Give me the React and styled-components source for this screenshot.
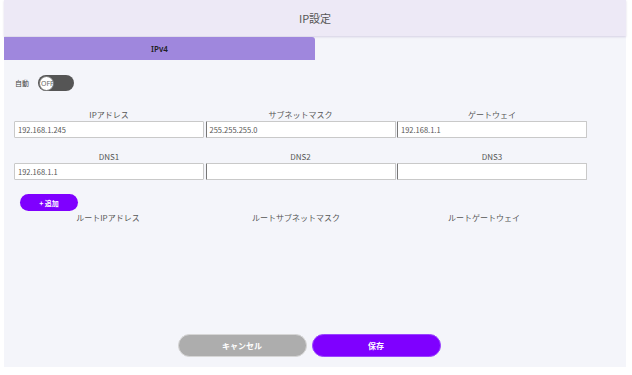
import styled, {createGlobalStyle} from 'styled-components'

const GlobalStyle = createGlobalStyle`
    html, body {
        margin: 0;
        padding: 0;
        background: #ffffff;
    }
    body {
        font-family: "Noto Sans CJK JP", "Noto Sans", sans-serif;
        color: #555;
    }
`

const fields = [
    [
        {label: 'IPアドレス', value: '192.168.1.245'},
        {label: 'サブネットマスク', value: '255.255.255.0', mark: true},
        {label: 'ゲートウェイ', value: '192.168.1.1', mark: true},
    ],
    [
        {label: 'DNS1', value: '192.168.1.1'},
        {label: 'DNS2', value: '', mark: true},
        {label: 'DNS3', value: '', mark: true},
    ],
]

const routeColumns = ['ルートIPアドレス', 'ルートサブネットマスク', 'ルートゲートウェイ']

const App = () => {
    return (
        <>
            <GlobalStyle/>
            <Panel>
                <Header>IP設定</Header>
                <TabBar>
                    <Tab>IPv4</Tab>
                </TabBar>
                <Body>
                    <ToggleRow>
                        <SmallLabel>自動</SmallLabel>
                        <Toggle>
                            <Knob>OFF</Knob>
                        </Toggle>
                    </ToggleRow>
                    {fields.map((row, i) => (
                        <FieldGrid key={i}>
                            {row.map(f => (
                                <Field key={f.label}>
                                    <FieldLabel>{f.label}</FieldLabel>
                                    <Input $mark={f.mark}>{f.value}</Input>
                                </Field>
                            ))}
                        </FieldGrid>
                    ))}
                    <AddButton>+ 追加</AddButton>
                    <RouteGrid>
                        {routeColumns.map(c => <FieldLabel key={c}>{c}</FieldLabel>)}
                    </RouteGrid>
                </Body>
                <Footer>
                    <PillButton $variant="cancel">キャンセル</PillButton>
                    <PillButton>保存</PillButton>
                </Footer>
            </Panel>
        </>
    )
}

export default App

const Panel = styled.div`
    margin: 0 6px 0 4px;
    height: 367px;
    background: #f4f5fa;
    display: flex;
    flex-direction: column;
`

const Header = styled.div`
    height: 36px;
    flex-shrink: 0;
    display: flex;
    align-items: center;
    justify-content: center;
    background: #ede9f6;
    box-shadow: 0 1px 2px rgba(120, 100, 160, 0.25);
    font-size: 11px;
    color: #555;
`

const TabBar = styled.div`
    margin-top: 1px;
    display: flex;
`

const Tab = styled.div`
    width: 311px;
    height: 23px;
    display: flex;
    align-items: center;
    justify-content: center;
    background: #9f87dd;
    border-top-right-radius: 3px;
    font-family: "Noto Sans", sans-serif;
    font-size: 8px;
    font-weight: 600;
    color: #222;
`

const Body = styled.div`
    flex: 1;
    padding: 15px 0 0 10px;
    display: flex;
    flex-direction: column;
`

const ToggleRow = styled.div`
    display: flex;
    align-items: center;
    height: 16px;
    padding-left: 1px;
    gap: 9px;
`

const SmallLabel = styled.span`
    font-size: 7px;
    color: #444;
`

const Toggle = styled.div`
    width: 36px;
    height: 16px;
    border-radius: 8px;
    background: #555;
    display: flex;
    align-items: center;
`

const Knob = styled.div`
    width: 15px;
    height: 15px;
    margin-left: 1px;
    border-radius: 50%;
    background: #fff;
    box-sizing: border-box;
    border: 1px solid #777;
    display: flex;
    align-items: center;
    padding-left: 1px;
    font-family: "Noto Sans", sans-serif;
    font-size: 7px;
    color: #666;
    white-space: nowrap;
    overflow: visible;
`

const FieldGrid = styled.div`
    display: grid;
    grid-template-columns: repeat(3, 190px);
    column-gap: 1.5px;
    margin-top: 18px;
    & + & {
        margin-top: 13px;
    }
`

const Field = styled.div`
    display: flex;
    flex-direction: column;
    align-items: center;
    gap: 1px;
`

const FieldLabel = styled.div`
    font-size: 8px;
    line-height: 11px;
    color: #555;
    text-align: center;
`

const Input = styled.div`
    width: 100%;
    height: 17px;
    box-sizing: border-box;
    background: #fff;
    border: 1px solid #c9c9c9;
    border-left: 1px solid ${p => p.$mark ? '#777' : '#c9c9c9'};
    border-radius: 1px;
    padding: 0 3px;
    display: flex;
    align-items: center;
    font-size: 7.5px;
    color: #555;
`

const AddButton = styled.div`
    margin: 14px 0 0 6px;
    width: 58px;
    height: 17px;
    border-radius: 9px;
    background: #7f00ff;
    color: #fff;
    font-size: 7px;
    font-weight: 600;
    display: flex;
    align-items: center;
    justify-content: center;
`

const RouteGrid = styled.div`
    display: grid;
    grid-template-columns: repeat(3, 188px);
    margin-top: 1px;
`

const Footer = styled.div`
    display: flex;
    justify-content: center;
    gap: 5px;
    padding: 0 12px 10px 0;
`

const PillButton = styled.div`
    width: 129px;
    height: 23px;
    border-radius: 12px;
    box-sizing: border-box;
    border: 1px solid ${p => p.$variant === 'cancel' ? '#d6d6d6' : '#9a44ff'};
    background: ${p => p.$variant === 'cancel' ? '#adadad' : '#7f00ff'};
    color: #fff;
    font-size: 8px;
    font-weight: 600;
    display: flex;
    align-items: center;
    justify-content: center;
`
